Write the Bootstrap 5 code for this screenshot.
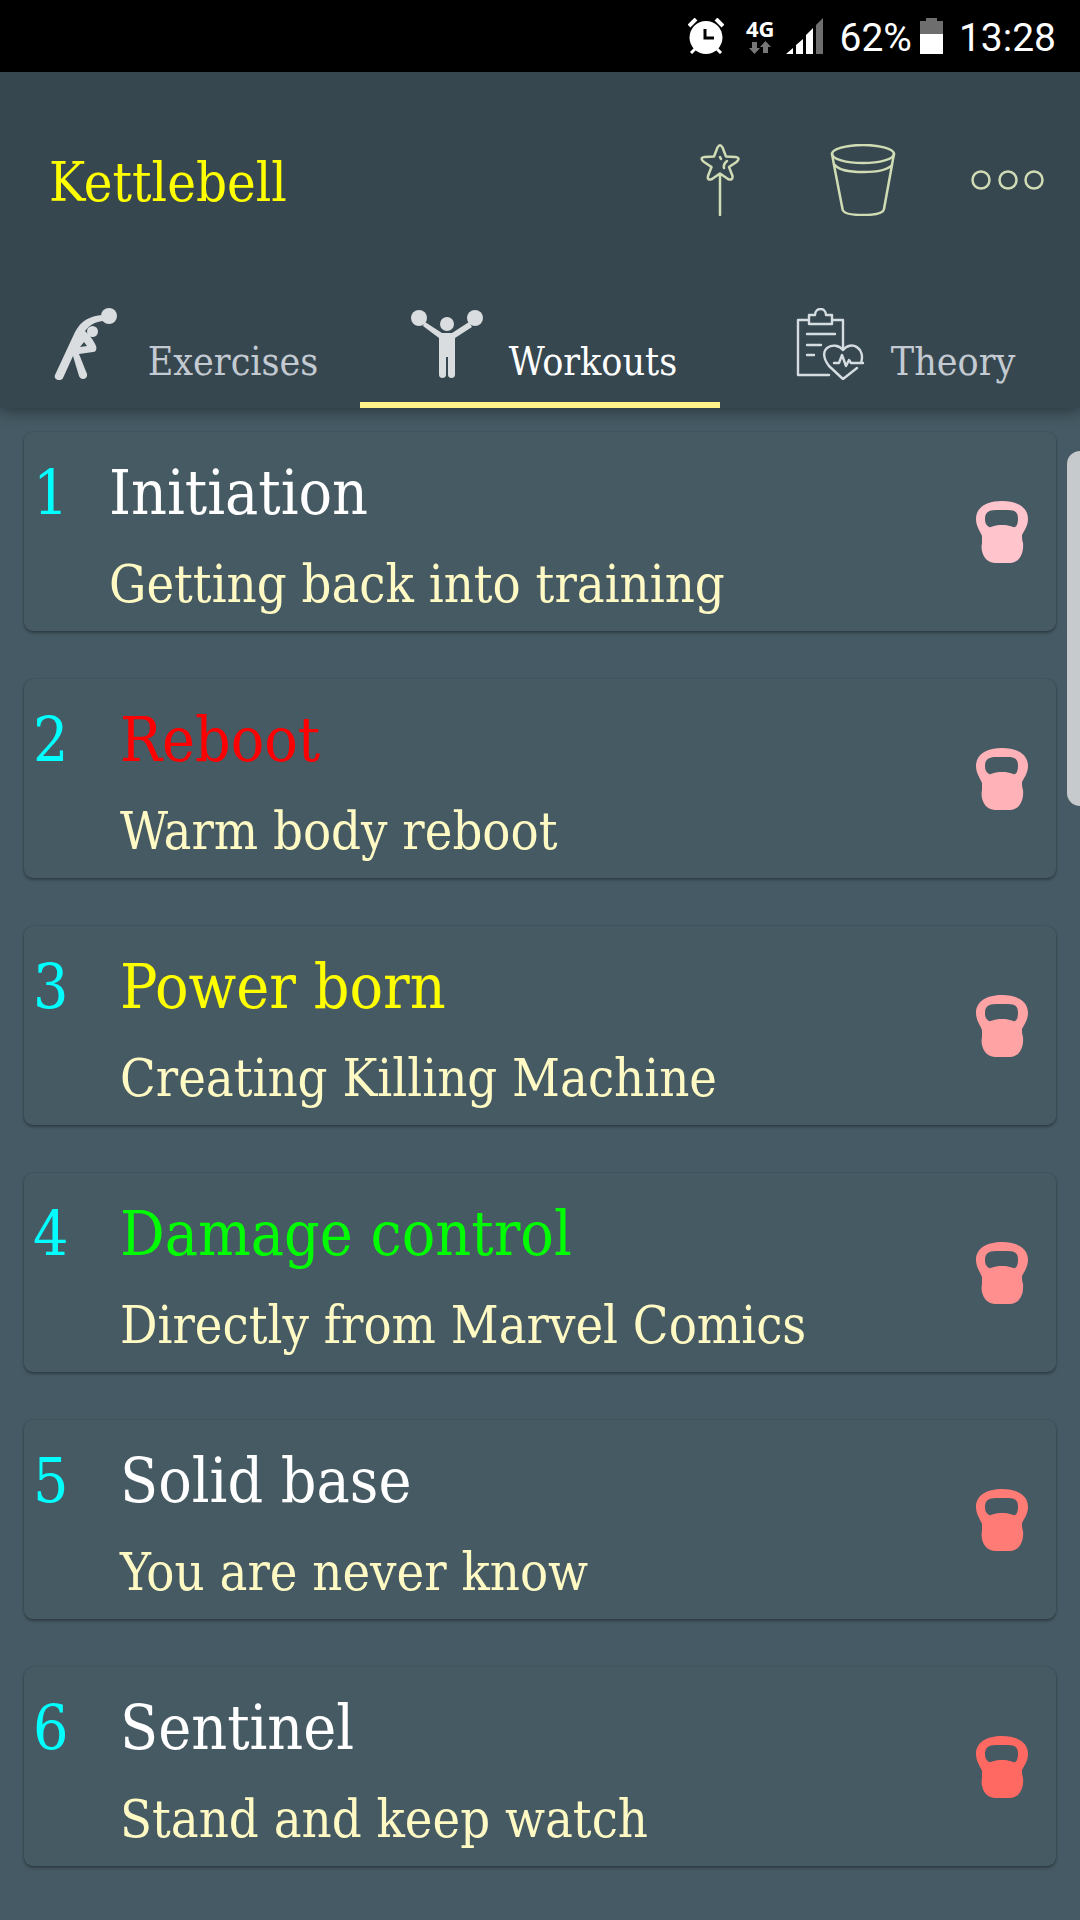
<!DOCTYPE html>
<html lang="en">
<head>
<meta charset="utf-8">
<meta name="viewport" content="width=device-width, initial-scale=1">
<title>Kettlebell</title>
<link href="https://cdn.jsdelivr.net/npm/bootstrap@5.3.0/dist/css/bootstrap.min.css" rel="stylesheet">
<style>
  body { background: #455a64; font-family: "DejaVu Serif Condensed", "DejaVu Serif", serif; min-height: 100vh; overflow: hidden; }
  svg { display: block; flex: none; }
  .status-bar { height: 72px; background: #000; color: #fff; font: 39px/48px Roboto, sans-serif; padding: 0 24px; }
  .status-text { padding-top: 3px; }
  .net-block { margin: 0 12px 0 22px; padding-bottom: 2px; gap: 2px; }
  .net-label { font: bold 22px/22px "Open Sans", "Noto Sans", sans-serif; }
  .app-head { background: #37474f; box-shadow: 0 3px 14px rgba(0, 0, 0, .4); z-index: 1; }
  .tool-row { height: 216px; padding: 0 34px 0 49px; }
  .tools { gap: 71px; }
  .app-title { color: #ff0; font-size: 54px; line-height: 64px; padding-top: 6px; }
  .tool-btn { background: none; border: 0; padding: 0; stroke: #cfdcb4; fill: none; stroke-width: 2.5; stroke-linecap: round; stroke-linejoin: round; }
  .tab-link { flex: 1 1 0; height: 120px; gap: 26px; padding: 0 0 2px 8px; border-bottom: 6px solid transparent; color: #c3cad2; font-size: 39px; line-height: 46px; text-decoration: none; }
  .tab-link.active { color: #fff; border-color: #fff38a; }
  .tab-text { padding-top: 36px; }
  .workouts { gap: 48px; padding: 24px; }
  .workout { background: #465a64; border-radius: 9px; padding: 7px 28px 7px 9px; box-shadow: 0 2px 3px rgba(0, 0, 0, .3), 0 0 2px rgba(0, 0, 0, .18); color: #fff; text-decoration: none; }
  .num { width: 87px; color: #0ff; }
  .num-slim { width: 76px; }
  .num, .name { font-size: 62px; line-height: 88px; padding-top: 10px; }
  .about { color: #fff9c4; font-size: 52px; line-height: 80px; padding-top: 7px; }
  .c-red { color: #f00; }
  .c-yellow { color: #ff0; }
  .c-green { color: #0f0; }
  .scroll-thumb { position: absolute; top: 43px; right: 0; width: 13px; height: 355px; background: #c6cacd; border-radius: 18px 0 0 18px; }
</style>
<script src="https://cdn.jsdelivr.net/npm/bootstrap@5.3.0/dist/js/bootstrap.bundle.min.js"></script>
</head>
<body>
<svg width="0" height="0" class="position-absolute" aria-hidden="true">
  <symbol id="bell" viewBox="0 0 52 62">
    <path fill="currentColor" fill-rule="evenodd" d="M26 0C11 0 0 6 0 18c0 7 4 12 6 17v7c-2 9 3 20 13 20h15c10 0 14-11 13-20-1-3-1-5-1-8 2-4 6-9 6-16C52 6 41 0 26 0ZM20 9h12c8 0 10 3 10 9 0 4-1 7-3 8-2 1-4-2-13-2s-11 3-13 2c-3-2-4-4-4-8 0-6 3-9 11-9Z"/>
  </symbol>
</svg>

<div class="status-bar d-flex align-items-center justify-content-end">
  <svg width="36" height="36" viewBox="0 0 36 36" fill="none" stroke="#fff" aria-label="Alarm">
    <circle cx="18" cy="19.500" r="16.500" fill="#fff" stroke="none"/>
    <path d="M1 8l7-7M28 1l7 7" stroke-width="4"/><path d="M3 35l5-5M33 35l-5-5" stroke-width="3"/>
    <path d="M17 11v9h9" stroke="#000" stroke-width="3"/>
  </svg>
  <div class="net-block d-flex flex-column align-items-center">
    <span class="net-label">4G</span>
    <svg width="22" height="13" viewBox="0 0 22 13" fill="#777"><path d="M3 1h5v6h3l-5.500 6L0 7h3zM14 12h5V6h3l-5.500-6L11 6h3z"/></svg>
  </div>
  <svg width="37" height="36" viewBox="0 0 37 36" fill="#fff" aria-label="Signal">
    <path d="M0 36l7-6v6zM10 27l7-6v15h-7zM20 17l7-7v26h-7z"/><path fill="#6e6e6e" d="M30 7l7-7v36h-7z"/>
  </svg>
  <span class="status-text ms-3">62%</span>
  <svg class="ms-2" width="23" height="36" viewBox="0 0 23 36" aria-label="Battery"><path fill="#6e6e6e" d="M6 0h11v3h6v13H0V3h6z"/><path fill="#fff" d="M0 16h23v20H0z"/></svg>
  <span class="status-text ms-3">13:28</span>
</div>

<header class="app-head position-relative">
  <div class="tool-row d-flex align-items-center">
    <h1 class="app-title m-0 me-auto fw-normal">Kettlebell</h1>
    <div class="tools d-flex">
      <button class="tool-btn" type="button" aria-label="Magic wand">
        <svg width="72" height="72" viewBox="0 0 72 72">
          <path d="M33.500 3.500Q36-1 38.500 3.500L42 12.500l9.500.5Q57 14 52.500 18L45 23l3.500 9Q49 37 44 35L36 29.500 28 35Q23 37 24 32L27.500 23 20 18Q15 14 20.500 13L30 12.500ZM36 30V71M43 17q-4 3-3 7M36 13l1 2"/>
        </svg>
      </button>
      <button class="tool-btn" type="button" aria-label="Bucket">
        <svg width="72" height="72" viewBox="0 0 72 72">
          <ellipse cx="36" cy="10" rx="31" ry="9"/><path d="M5 10Q6 15 7 21L15.500 65Q16 71 36 71T57 65L65 21Q66 15 67 10M8 21Q13 28 36 28T65 21"/>
        </svg>
      </button>
      <button class="tool-btn" type="button" aria-label="More">
        <svg width="76" height="72" viewBox="0 0 76 72"><circle cx="11" cy="36" r="8.500"/><circle cx="38" cy="36" r="8.500"/><circle cx="64" cy="36" r="8.500"/></svg>
      </button>
    </div>
  </div>
  <nav class="d-flex">
    <a href="#" class="tab-link d-flex align-items-center justify-content-center">
      <svg width="72" height="72" viewBox="0 0 72 72" fill="#d9dde0">
        <circle cx="59" cy="8" r="8"/><circle cx="42.500" cy="23.500" r="5.500"/>
        <path fill-rule="evenodd" d="M53 7C39 8 31 13 25 24L5 67c-2 5 6 7 8 3l10-22 6 20c2 5 9 3 8-2l-8-20 14-2c3 0 4-3 3-6-3-7-6-10-11-15 5-6 9-9 18-10ZM34 34l3 4-7 1Z"/>
      </svg>
      <span class="tab-text">Exercises</span>
    </a>
    <a href="#" class="tab-link active d-flex align-items-center justify-content-center" aria-current="page">
      <svg width="72" height="72" viewBox="0 0 72 72" fill="#d9dde0">
        <circle cx="8" cy="10" r="8"/><circle cx="64" cy="10" r="8"/><circle cx="36" cy="16" r="7"/>
        <path d="M14 14l17 11h10L58 14l3 5-17 11v37c0 4-7 4-7 0V49h-2v18c0 4-7 4-7 0V30L12 18z"/>
      </svg>
      <span class="tab-text">Workouts</span>
    </a>
    <a href="#" class="tab-link d-flex align-items-center justify-content-center">
      <svg width="72" height="72" viewBox="0 0 72 72" fill="none" stroke="#d5dde1" stroke-width="2.400" stroke-linecap="round" stroke-linejoin="round">
        <path d="M16 12H5v55h31M39 12h11v28M16 7h6c0-8 11-8 11 0h6v9H16zM14 26h28M14 37h14M14 47h7"/>
        <path d="M64 60L50 71 36 58C22 40 42 32 50 42c8-10 23-2 18 13M41 55h5l3-8 4 11 3-6 2 3h12"/>
      </svg>
      <span class="tab-text">Theory</span>
    </a>
  </nav>
</header>

<main class="workouts d-flex flex-column position-relative">
  <a href="#" class="workout d-flex"><span class="num num-slim">1</span><span class="d-flex flex-column me-auto"><span class="name">Initiation</span><span class="about">Getting back into training</span></span><svg class="align-self-center" width="52" height="62" color="#ffc4cc"><use href="#bell"/></svg></a>
  <a href="#" class="workout d-flex"><span class="num">2</span><span class="d-flex flex-column me-auto"><span class="name c-red">Reboot</span><span class="about">Warm body reboot</span></span><svg class="align-self-center" width="52" height="62" color="#ffb3b8"><use href="#bell"/></svg></a>
  <a href="#" class="workout d-flex"><span class="num">3</span><span class="d-flex flex-column me-auto"><span class="name c-yellow">Power born</span><span class="about">Creating Killing Machine</span></span><svg class="align-self-center" width="52" height="62" color="#ffa3a5"><use href="#bell"/></svg></a>
  <a href="#" class="workout d-flex"><span class="num">4</span><span class="d-flex flex-column me-auto"><span class="name c-green">Damage control</span><span class="about">Directly from Marvel Comics</span></span><svg class="align-self-center" width="52" height="62" color="#ff8f8f"><use href="#bell"/></svg></a>
  <a href="#" class="workout d-flex"><span class="num">5</span><span class="d-flex flex-column me-auto"><span class="name">Solid base</span><span class="about">You are never know</span></span><svg class="align-self-center" width="52" height="62" color="#ff7b76"><use href="#bell"/></svg></a>
  <a href="#" class="workout d-flex"><span class="num">6</span><span class="d-flex flex-column me-auto"><span class="name">Sentinel</span><span class="about">Stand and keep watch</span></span><svg class="align-self-center" width="52" height="62" color="#ff6961"><use href="#bell"/></svg></a>
  <div class="scroll-thumb"></div>
</main>
</body>
</html>
